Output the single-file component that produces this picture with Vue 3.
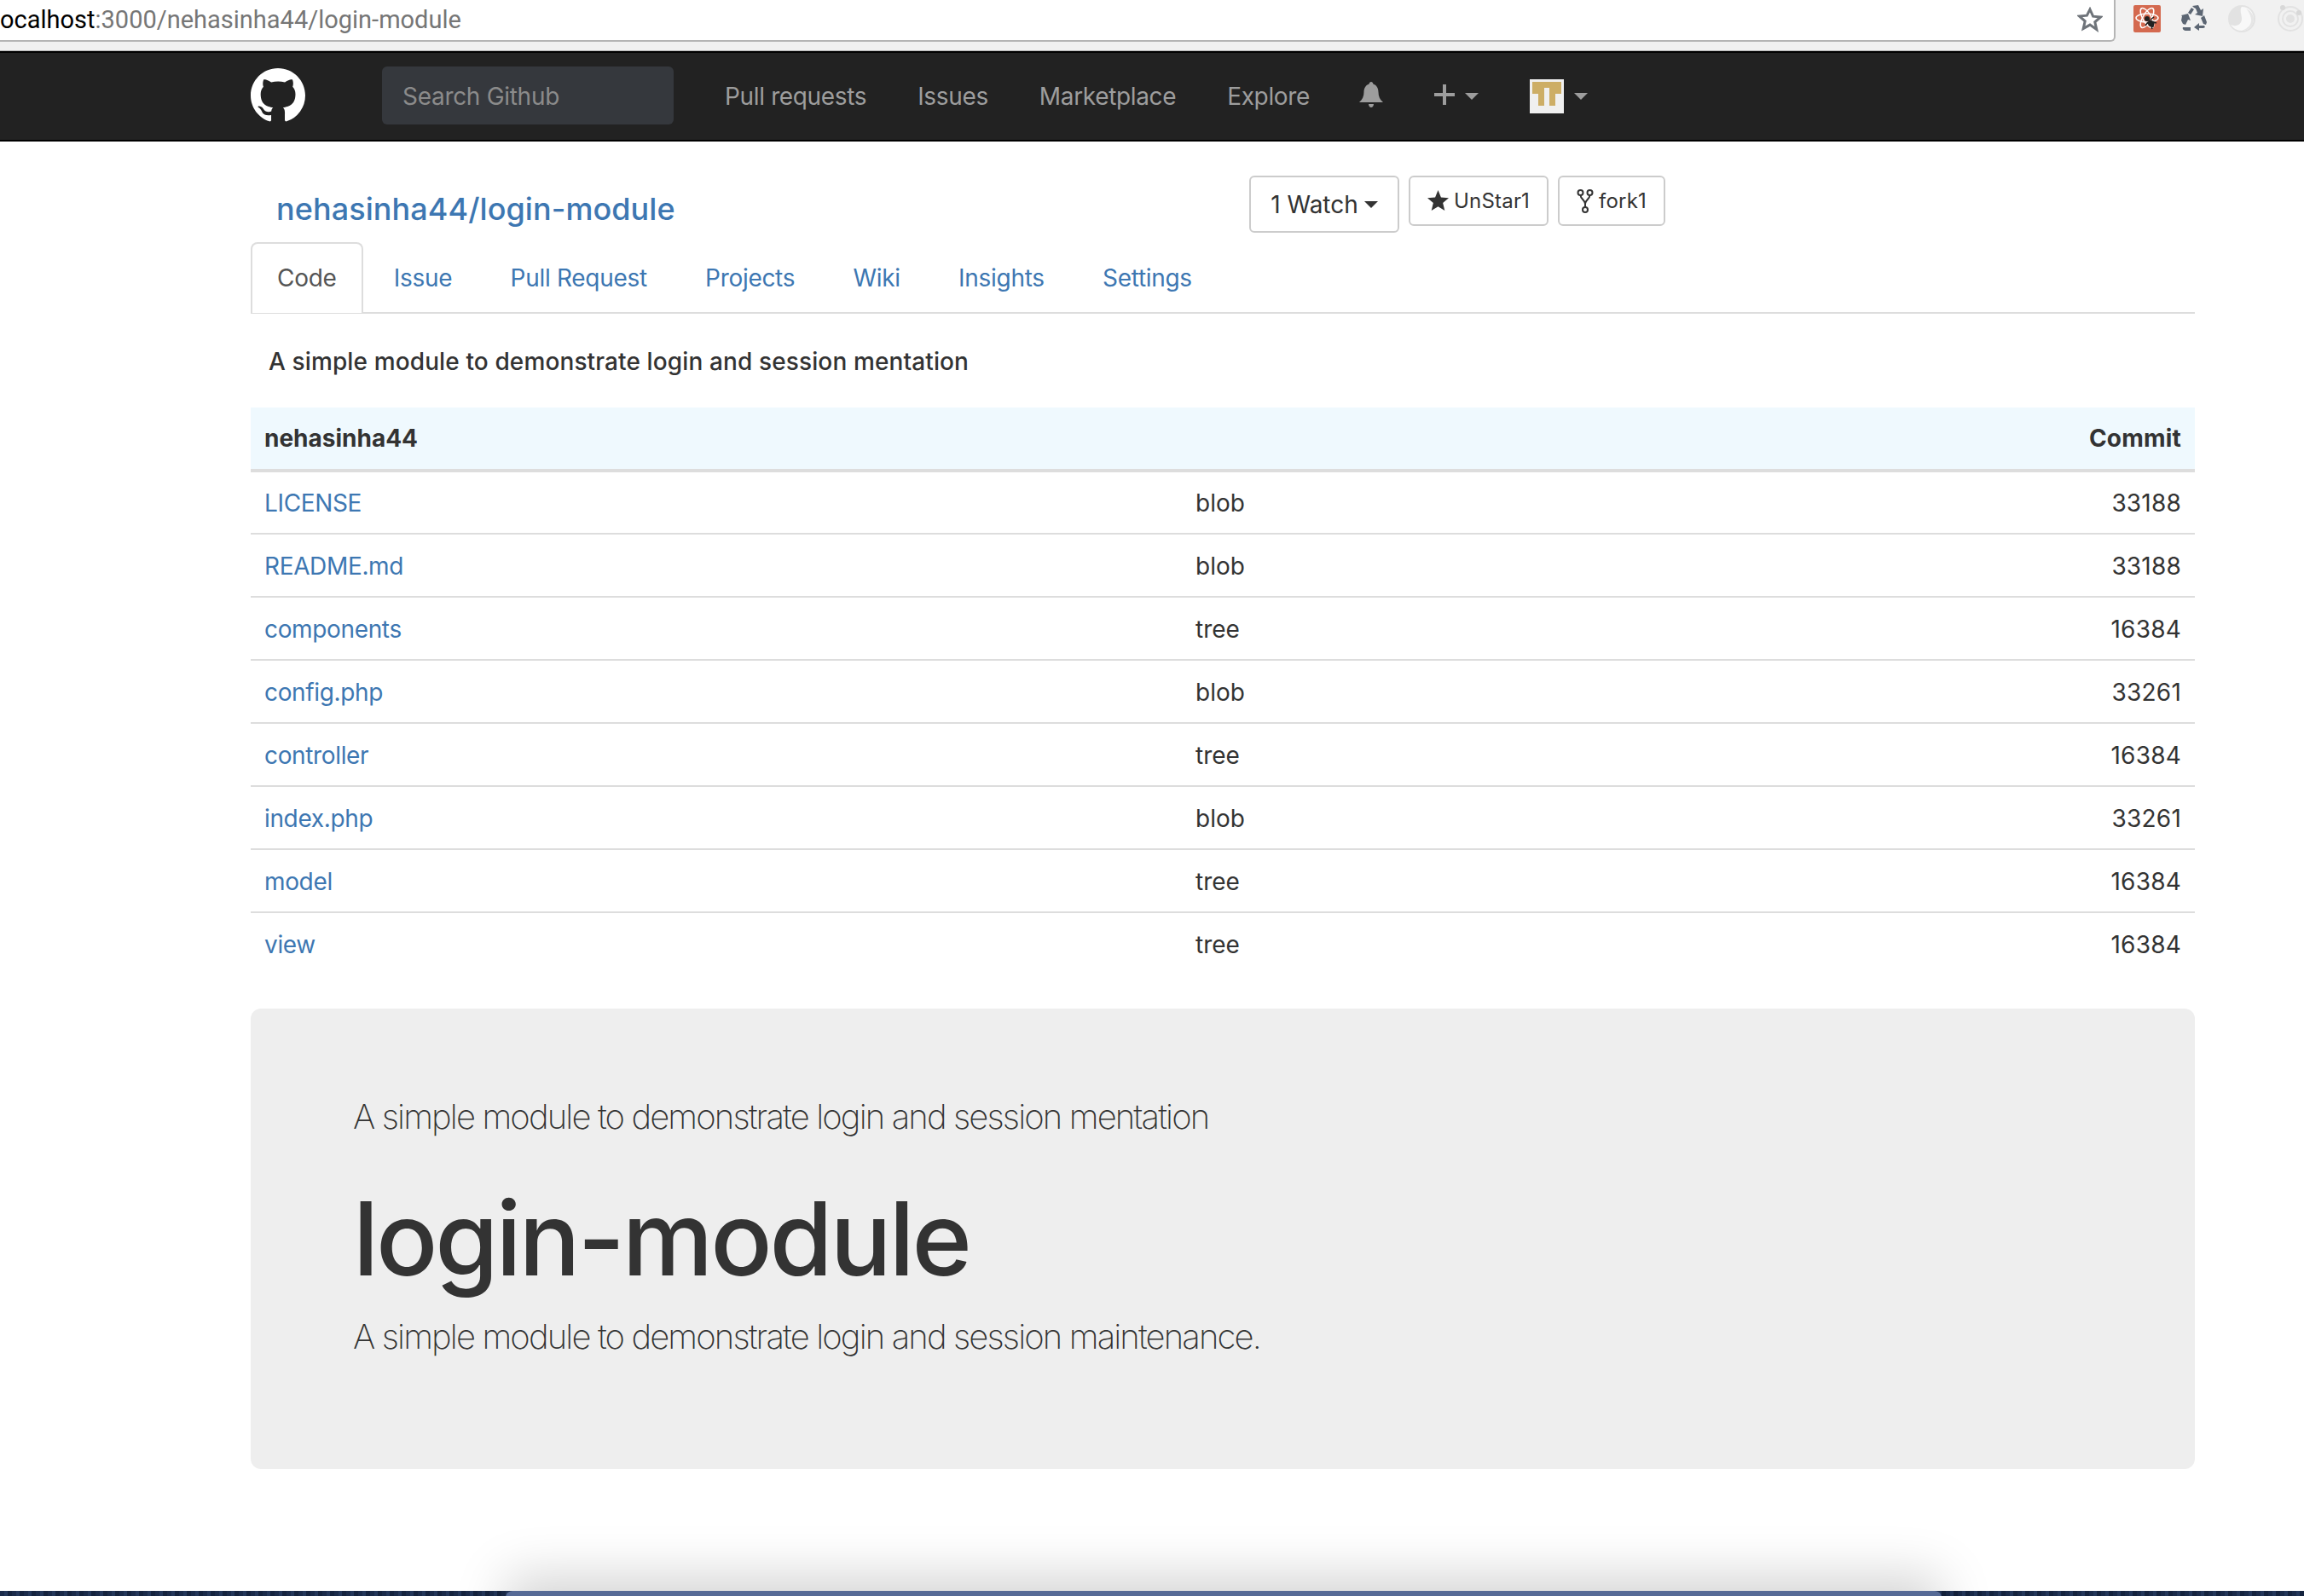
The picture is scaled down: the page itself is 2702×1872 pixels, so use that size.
<script setup>
const navLinks = ['Pull requests', 'Issues', 'Marketplace', 'Explore']
const tabs = ['Issue', 'Pull Request', 'Projects', 'Wiki', 'Insights', 'Settings']
const rows = [
  ['LICENSE', 'blob', 33188],
  ['README.md', 'blob', 33188],
  ['components', 'tree', 16384],
  ['config.php', 'blob', 33261],
  ['controller', 'tree', 16384],
  ['index.php', 'blob', 33261],
  ['model', 'tree', 16384],
  ['view', 'tree', 16384]
]
</script>

<template>
  <div class="page">
    <div class="chrome">
      <div class="address">
        <span class="url"><b>ocalhost</b>:3000/nehasinha44/login-module</span>
        <svg class="star" viewBox="0 0 30 30" width="30" height="30"><path d="M15 3l3.600 8.200 8.900.8-6.700 5.900 2 8.700L15 21.100l-7.800 4.500 2-8.700-6.700-5.900 8.900-.8z" fill="none" stroke="#6f747a" stroke-width="3"/></svg>
      </div>
      <div class="extensions">
        <svg class="ext" viewBox="0 0 32 32" width="32" height="32">
          <rect width="32" height="32" rx="2" fill="#d4694f"/>
          <g fill="none" stroke="#fff" stroke-width="1.500">
            <ellipse cx="16" cy="15" rx="13" ry="5"/>
            <ellipse cx="16" cy="15" rx="13" ry="5" transform="rotate(60 16 15)"/>
            <ellipse cx="16" cy="15" rx="13" ry="5" transform="rotate(120 16 15)"/>
          </g>
          <circle cx="16" cy="16" r="3" fill="#222"/>
          <path d="M19 18l5 2-1 5-4-1-2-3z M17 20l-3 4M20 17l4-3M24 20l3 1M21 25l1 3" fill="#222" stroke="#222" stroke-width="1.500"/>
        </svg>
        <svg class="recycle" viewBox="0 0 30 30" width="30" height="30" fill="#5c6673">
          <path d="M8 9l4-6 3 2-4 6z"/>
          <path d="M13 1l7-1 3 6 3-2-1 9-9-2 3-2-2-5-2-1z"/>
          <path d="M0 18l1-5-1-1 8-2 3 8-3-1-3 6-3-1z"/>
          <path d="M2 26h9v4H6c-3 0-5-2-4-4z"/>
          <path d="M15 26l6-5v3h6l1 2-2 1h-5v3z"/>
          <path d="M23 15l4-3 3 8-1 3-3-1z"/>
        </svg>
        <svg class="swirl" viewBox="0 0 32 32" width="32" height="32">
          <circle cx="16" cy="16" r="16" fill="#e2e2e2"/>
          <path d="M16 2c8 0 14 6 14 14 0 8-6 14-14 14-6 0-10-3-13-7 6 3 13 0 13-7 0-5-3-11 0-14z" fill="#f8f8f8"/>
          <path d="M21 4c6 3 9 8 9 12 0 8-6 14-14 14 8-3 12-8 11-14-1-5-3-9-6-12z" fill="#e6e6e6"/>
        </svg>
        <svg class="ionic" viewBox="0 0 32 32" width="32" height="32" fill="none" stroke="#e2e2e2" stroke-width="2">
          <circle cx="16" cy="16" r="14"/>
          <circle cx="16" cy="16" r="9"/>
          <circle cx="16" cy="16" r="4" fill="#e2e2e2"/>
          <circle cx="7" cy="3" r="3" fill="#d8d8d8" stroke="none"/>
          <circle cx="26" cy="9" r="3" fill="#d8d8d8" stroke="none"/>
        </svg>
      </div>
    </div>

    <nav class="navbar">
      <svg class="logo" viewBox="0 0 16 16" width="64" height="64"><path fill="#fff" d="M8 0C3.58 0 0 3.58 0 8c0 3.54 2.29 6.53 5.47 7.59.4.07.55-.17.55-.38 0-.19-.01-.82-.01-1.49-2.01.37-2.53-.49-2.69-.94-.09-.23-.48-.94-.82-1.13-.28-.15-.68-.52-.01-.53.63-.01 1.08.58 1.23.82.72 1.21 1.87.87 2.33.66.07-.52.28-.87.51-1.07-1.78-.2-3.64-.89-3.64-3.95 0-.87.31-1.59.82-2.15-.08-.2-.36-1.02.08-2.12 0 0 .67-.21 2.2.82.64-.18 1.32-.27 2-.27.68 0 1.36.09 2 .27 1.53-1.04 2.2-.82 2.2-.82.44 1.1.16 1.92.08 2.12.51.56.82 1.27.82 2.15 0 3.07-1.87 3.75-3.65 3.95.29.25.54.73.54 1.48 0 1.07-.01 1.93-.01 2.2 0 .21.15.46.55.38A8.013 8.013 0 0016 8c0-4.42-3.58-8-8-8z"/></svg>
      <div class="search">Search Github</div>
      <div class="nav-links">
        <a v-for="link in navLinks" :key="link">{{ link }}</a>
      </div>
      <svg class="bell" viewBox="0 0 30 30" width="30" height="30"><path fill="#9d9d9d" d="M15 0c1.300 0 2.200 1 2.400 2.400C22 4 23.500 8 23.500 12c0 5 1.800 9 5.500 12H1c3.700-3 5.500-7 5.500-12 0-4 1.500-8 6.100-9.600C12.800 1 13.700 0 15 0zM12 26h6c0 2-1.300 4-3 4s-3-2-3-4z"/></svg>
      <svg class="plus" viewBox="0 0 24 24" width="24" height="24"><path fill="#9d9d9d" d="M10 0h4v10h10v4H14v10h-4V14H0v-4h10z"/></svg>
      <span class="caret plus-caret"></span>
      <div class="avatar">
        <svg viewBox="0 0 34 28" width="34" height="28"><path fill="#cdae66" d="M0 0h34v14h-7v14h-7V7h-6v21H7V14H0z"/></svg>
      </div>
      <span class="caret avatar-caret"></span>
    </nav>

    <main class="content">
      <div class="repo-head">
        <h2 class="repo-title">nehasinha44/login-module</h2>
        <div class="actions">
          <button class="btn watch">1 Watch <span class="caret dark"></span></button>
          <button class="btn small">
            <svg viewBox="0 0 24 24" width="25" height="25"><path fill="#333" d="M12 0l3.300 8.200 8.700.7-6.600 5.600 2.100 8.500L12 18.400 4.500 23l2.100-8.500L0 8.900l8.700-.7z"/></svg>
            UnStar1
          </button>
          <button class="btn small fork">
            <svg viewBox="0 0 20 28" width="20" height="28" fill="none" stroke="#333" stroke-width="2"><circle cx="4.500" cy="4" r="3"/><circle cx="15.500" cy="4" r="3"/><circle cx="10" cy="24" r="3"/><path d="M4.500 7c0 4 5.500 6 5.500 10v4M15.500 7c0 4-5.500 6-5.500 10"/></svg>
            fork1
          </button>
        </div>
      </div>

      <ul class="tabs">
        <li class="tab active"><a>Code</a></li>
        <li v-for="tab in tabs" :key="tab" class="tab"><a>{{ tab }}</a></li>
      </ul>

      <p class="desc">A simple module to demonstrate login and session mentation</p>

      <table class="files">
        <thead>
          <tr>
            <th>nehasinha44</th>
            <th></th>
            <th class="num">Commit</th>
          </tr>
        </thead>
        <tbody>
          <tr v-for="row in rows" :key="row[0]">
            <td class="name"><a>{{ row[0] }}</a></td>
            <td class="type">{{ row[1] }}</td>
            <td class="num">{{ row[2] }}</td>
          </tr>
        </tbody>
      </table>

      <section class="jumbotron">
        <p class="lead first">A simple module to demonstrate login and session mentation</p>
        <h1>login-module</h1>
        <p class="lead">A simple module to demonstrate login and session maintenance.</p>
      </section>
    </main>

    <div class="desktop">
      <div class="window"></div>
    </div>
  </div>
</template>

<style scoped>
.page {
  height: 1872px;
  display: flex;
  flex-direction: column;
  background: #fff;
  font-family: Inter, "Liberation Sans", sans-serif;
  color: #333;
  overflow: hidden;
}
.chrome {
  height: 60px;
  flex: none;
  box-sizing: border-box;
  display: flex;
  background: #f1f1f1;
  border-bottom: 1px solid #b5b5b5;
}
.address {
  flex: none;
  width: 2481px;
  height: 49px;
  box-sizing: border-box;
  display: flex;
  align-items: center;
  justify-content: space-between;
  padding: 0 13px 2px 0;
  background: #fff;
  border: solid #b5b5b5;
  border-width: 0 2px 2px 0;
  border-bottom-right-radius: 6px;
  overflow: hidden;
}
.url {
  font-family: Roboto, sans-serif;
  font-size: 29px;
  color: #767676;
  white-space: nowrap;
}
.url b {
  font-weight: 400;
  color: #000;
}
.extensions {
  display: flex;
  align-items: flex-start;
  gap: 24px;
  padding: 6px 0 0 21px;
}
.ext, .recycle, .swirl, .ionic {
  flex: none;
}
.swirl, .ionic {
  margin-left: 1px;
}
.navbar {
  height: 106px;
  flex: none;
  box-sizing: border-box;
  display: flex;
  align-items: center;
  padding: 0 0 0 294px;
  background: #222;
  border-top: 2px solid #000;
  border-bottom: 2px solid #000;
}
.logo {
  margin-top: -3px;
}
.search {
  width: 342px;
  height: 68px;
  box-sizing: border-box;
  margin: -2px 0 0 90px;
  padding-left: 24px;
  line-height: 70px;
  font-size: 28px;
  letter-spacing: -0.3px;
  color: #8b8b8b;
  background: #35383d;
  border-radius: 6px;
}
.nav-links {
  display: flex;
  gap: 60px;
  margin-left: 60px;
  font-size: 28px;
  letter-spacing: -0.35px;
  color: #9d9d9d;
}
.bell {
  margin: -4px 0 0 57px;
}
.plus {
  margin: -4px 0 0 59px;
}
.caret {
  width: 0;
  height: 0;
  display: inline-block;
  border-left: 8px solid transparent;
  border-right: 8px solid transparent;
  border-top: 8px solid #9d9d9d;
}
.plus-caret {
  margin-left: 12px;
}
.avatar {
  width: 40px;
  height: 40px;
  display: flex;
  justify-content: center;
  padding-top: 3px;
  box-sizing: border-box;
  margin-left: 60px;
  background: #f0f0f0;
}
.avatar-caret {
  margin-left: 12px;
}
.content {
  width: 2280px;
  margin-left: 294px;
}
.repo-head {
  height: 118px;
  display: flex;
  align-items: flex-start;
}
.repo-title {
  margin: 56px 0 0 30px;
  width: 468px;
  font-size: 36px;
  line-height: 46px;
  font-weight: 500;
  letter-spacing: 0.07px;
  color: #3d77b2;
  white-space: nowrap;
}
.actions {
  display: flex;
  align-items: flex-start;
  gap: 11px;
  margin: 40px 0 0 673px;
}
.btn {
  display: flex;
  align-items: center;
  justify-content: center;
  box-sizing: border-box;
  background: #fff;
  border: 2px solid #ccc;
  border-radius: 6px;
  font-family: inherit;
  color: #333;
  white-space: nowrap;
  padding: 0;
}
.watch {
  width: 176px;
  height: 67px;
  font-size: 28px;
  gap: 7px;
}
.caret.dark {
  border-top-color: #333;
}
.small {
  height: 59px;
  font-size: 24px;
  letter-spacing: 0.2px;
  gap: 6px;
  padding: 0 20px;
}
.tabs {
  display: flex;
  list-style: none;
  margin: 0;
  padding: 0;
  height: 84px;
  box-sizing: border-box;
  border-bottom: 2px solid #ddd;
}
.tab {
  margin-right: 4.3px;
  height: 83px;
  box-sizing: border-box;
  padding: 0 30px;
  line-height: 81px;
  font-size: 28px;
  letter-spacing: -0.3px;
  color: #3d77b2;
  border: 2px solid transparent;
  border-bottom: 0;
}
.tab.active {
  padding: 0 29px;
  color: #555;
  background: #fff;
  border-color: #ddd;
  border-radius: 8px 8px 0 0;
}
.desc {
  margin: 0;
  padding: 0 0 0 21px;
  height: 110px;
  line-height: 112px;
  font-size: 28px;
  font-weight: 500;
  letter-spacing: 0.12px;
}
.files {
  width: 100%;
  border-collapse: collapse;
  table-layout: fixed;
  font-size: 28px;
}
.files th, .files td {
  height: 74px;
  box-sizing: border-box;
  padding: 0 16px;
  text-align: left;
}
.files td {
  padding-top: 1px;
}
.files th {
  font-weight: 700;
  background: #eff9fe;
  border-bottom: 4px solid #ddd;
}
.files th:nth-child(1), .files td:nth-child(1) {
  width: 1092px;
}
.files tbody tr + tr td {
  border-top: 2px solid #ddd;
}
.files .num {
  width: 300px;
  text-align: right;
  letter-spacing: 0.2px;
}
.name {
  color: #3d77b2;
  letter-spacing: -0.35px;
}
.jumbotron {
  height: 540px;
  box-sizing: border-box;
  margin-top: 39px;
  padding: 99px 120px 0;
  background: #eee;
  border-radius: 12px;
}
.lead {
  margin: 0;
  font-size: 40px;
  line-height: 56px;
  font-weight: 200;
  letter-spacing: -1.88px;
  white-space: nowrap;
}
h1 {
  margin: 40px 0 12px;
  font-size: 120px;
  line-height: 150px;
  font-weight: 500;
  letter-spacing: -3.2px;
}
.desktop {
  margin-top: auto;
  height: 6px;
  flex: none;
  display: flex;
  align-items: flex-start;
  padding-left: 593px;
  background: repeating-linear-gradient(90deg, #1b2b4a 0 5px, #24375a 5px 9px, #15233e 9px 14px);
}
.window {
  width: 1684px;
  height: 200px;
  background: #566a96;
  border-radius: 8px 8px 0 0;
  box-shadow: 0 -18px 60px rgba(0, 0, 0, 0.17);
}
</style>

<style>
html, body {
  margin: 0;
  background: #fff;
}
</style>
